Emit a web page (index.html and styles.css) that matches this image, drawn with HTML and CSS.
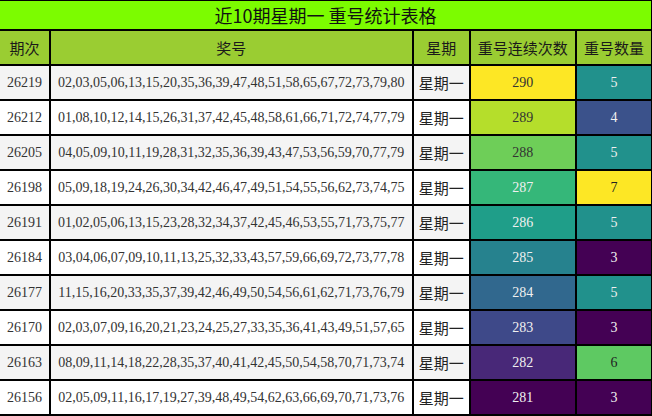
FILE: index.html
```html
<!DOCTYPE html>
<html lang="zh">
<head>
<meta charset="utf-8">
<link rel="stylesheet" href="styles.css">
</head>
<body>
<table class="stats">
  <colgroup>
    <col class="c-issue"><col class="c-nums"><col class="c-day"><col class="c-run"><col class="c-cnt">
  </colgroup>
  <thead>
    <tr><th class="title" colspan="5">近10期星期一 重号统计表格</th></tr>
    <tr class="head">
      <th>期次</th><th>奖号</th><th>星期</th><th>重号连续次数</th><th>重号数量</th>
    </tr>
  </thead>
  <tbody>
    <tr class="odd"><td>26219</td><td class="nums">02,03,05,06,13,15,20,35,36,39,47,48,51,58,65,67,72,73,79,80</td><td class="day">星期一</td><td class="v290">290</td><td class="n5">5</td></tr>
    <tr><td>26212</td><td class="nums">01,08,10,12,14,15,26,31,37,42,45,48,58,61,66,71,72,74,77,79</td><td class="day">星期一</td><td class="v289">289</td><td class="n4">4</td></tr>
    <tr class="odd"><td>26205</td><td class="nums">04,05,09,10,11,19,28,31,32,35,36,39,43,47,53,56,59,70,77,79</td><td class="day">星期一</td><td class="v288">288</td><td class="n5">5</td></tr>
    <tr><td>26198</td><td class="nums">05,09,18,19,24,26,30,34,42,46,47,49,51,54,55,56,62,73,74,75</td><td class="day">星期一</td><td class="v287">287</td><td class="n7">7</td></tr>
    <tr class="odd"><td>26191</td><td class="nums">01,02,05,06,13,15,23,28,32,34,37,42,45,46,53,55,71,73,75,77</td><td class="day">星期一</td><td class="v286">286</td><td class="n5">5</td></tr>
    <tr><td>26184</td><td class="nums">03,04,06,07,09,10,11,13,25,32,33,43,57,59,66,69,72,73,77,78</td><td class="day">星期一</td><td class="v285">285</td><td class="n3">3</td></tr>
    <tr class="odd"><td>26177</td><td class="nums">11,15,16,20,33,35,37,39,42,46,49,50,54,56,61,62,71,73,76,79</td><td class="day">星期一</td><td class="v284">284</td><td class="n5">5</td></tr>
    <tr><td>26170</td><td class="nums">02,03,07,09,16,20,21,23,24,25,27,33,35,36,41,43,49,51,57,65</td><td class="day">星期一</td><td class="v283">283</td><td class="n3">3</td></tr>
    <tr class="odd"><td>26163</td><td class="nums">08,09,11,14,18,22,28,35,37,40,41,42,45,50,54,58,70,71,73,74</td><td class="day">星期一</td><td class="v282">282</td><td class="n6">6</td></tr>
    <tr><td>26156</td><td class="nums">02,05,09,11,16,17,19,27,39,48,49,54,62,63,66,69,70,71,73,76</td><td class="day">星期一</td><td class="v281">281</td><td class="n3">3</td></tr>
  </tbody>
</table>
</body>
</html>
```

FILE: styles.css
```css
html, body {
  margin: 0;
  padding: 0;
  background: #ffffff;
  overflow: hidden;
}

.stats {
  border-collapse: collapse;
  table-layout: fixed;
  margin: -1px 0 0 -2px;
  width: 655px;
  font-family: "Liberation Serif", "Noto Sans CJK SC", serif;
  color: #333333;
}

.c-issue { width: 51px; }
.c-nums { width: 362px; }
.c-day { width: 57px; }
.c-run { width: 106px; }
.c-cnt { width: 76px; }

.stats th,
.stats td {
  border: 2px solid #000000;
  padding: 0;
  text-align: center;
  white-space: nowrap;
  overflow: hidden;
}

.stats .title {
  height: 28px;
  background: #7cfc00;
  font-family: "Noto Sans CJK SC", sans-serif;
  font-weight: normal;
  font-size: 18px;
  color: #111111;
  line-height: 28px;
}

.stats .head th {
  height: 33px;
  background: #9acd32;
  font-family: "Noto Sans CJK SC", sans-serif;
  font-weight: normal;
  font-size: 15px;
  color: #1a1a1a;
}

.stats td {
  height: 33px;
  font-size: 14px;
  background: #ffffff;
}

.stats tr.odd td { background: #f4f4f4; }

.stats td.nums { letter-spacing: 0; }

.stats td.day {
  font-family: "Noto Sans CJK SC", sans-serif;
  font-size: 15px;
  color: #222222;
}

.stats tr td.v290 { background: #fde725; color: #333; }
.stats tr td.v289 { background: #b5de2b; color: #333; }
.stats tr td.v288 { background: #6ece58; color: #333; }
.stats tr td.v287 { background: #35b779; color: #f0f0f0; }
.stats tr td.v286 { background: #1f9e89; color: #f0f0f0; }
.stats tr td.v285 { background: #26828e; color: #f0f0f0; }
.stats tr td.v284 { background: #31688e; color: #f0f0f0; }
.stats tr td.v283 { background: #3e4989; color: #f0f0f0; }
.stats tr td.v282 { background: #482878; color: #f0f0f0; }
.stats tr td.v281 { background: #440154; color: #f0f0f0; }

.stats tr td.n3 { background: #440154; color: #f0f0f0; }
.stats tr td.n4 { background: #3b528b; color: #f0f0f0; }
.stats tr td.n5 { background: #21918c; color: #f0f0f0; }
.stats tr td.n6 { background: #5ec962; color: #222; }
.stats tr td.n7 { background: #fde725; color: #222; }
```
